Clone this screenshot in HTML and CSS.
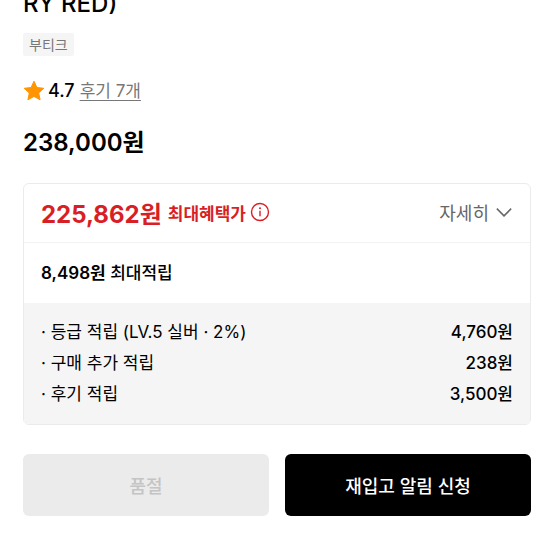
FILE: index.html
```html
<!DOCTYPE html>
<html lang="ko">
<head>
  <meta charset="UTF-8" />
  <meta name="viewport" content="width=device-width, initial-scale=1.0" />
  <title>상품 정보</title>
  <link rel="stylesheet" href="styles.css">
</head>
<body>
  <main class="product">
    <h1 class="product-name">RY RED)</h1>
    <span class="tag">부티크</span>

    <div class="rating">
      <svg class="star" viewBox="0 0 22 22" aria-hidden="true">
        <path d="M11 1.2l2.9 6.3 6.9.8-5.1 4.7 1.4 6.8-6.1-3.4-6.1 3.4 1.4-6.8L1.2 8.3l6.9-.8z" fill="#ff9500" stroke="#ff9500" stroke-linejoin="round" />
      </svg>
      <span class="score">4.7</span>
      <a class="review-link" href="#reviews">후기 7개</a>
    </div>

    <p class="price">238,000원</p>

    <section class="benefit">
      <div class="benefit-head">
        <strong class="benefit-price">225,862원</strong>
        <span class="benefit-label">최대혜택가</span>
        <button class="info-btn" type="button" aria-label="최대혜택가 안내">
          <svg viewBox="0 0 20 20" aria-hidden="true">
            <circle cx="10" cy="10" r="8.5" fill="none" stroke="currentColor" stroke-width="1.4" />
            <circle cx="10" cy="6.3" r="1" fill="currentColor" />
            <path d="M10 8.8v5.4" stroke="currentColor" stroke-width="1.4" />
          </svg>
        </button>
        <button class="detail-btn" type="button">
          자세히
          <svg viewBox="0 0 16 10" aria-hidden="true">
            <path d="M1.5 1.5L8 8l6.5-6.5" fill="none" stroke="currentColor" stroke-width="1.4" />
          </svg>
        </button>
      </div>

      <p class="benefit-point"><strong>8,498원</strong> 최대적립</p>

      <dl class="point-list">
        <div class="point-row">
          <dt>· 등급 적립 (LV.5 실버 · 2%)</dt>
          <dd>4,760원</dd>
        </div>
        <div class="point-row">
          <dt>· 구매 추가 적립</dt>
          <dd>238원</dd>
        </div>
        <div class="point-row">
          <dt>· 후기 적립</dt>
          <dd>3,500원</dd>
        </div>
      </dl>
    </section>

    <div class="actions">
      <button class="btn btn-soldout" type="button" disabled>품절</button>
      <button class="btn btn-restock" type="button">재입고 알림 신청</button>
    </div>
  </main>
</body>
</html>
```

FILE: styles.css
```css
* {
  box-sizing: border-box;
  margin: 0;
  padding: 0;
}

body {
  font-family: Inter, "Noto Sans CJK KR", sans-serif;
  font-size: 17px;
  background: #fff;
  color: #000;
}

button {
  font: inherit;
  border: none;
  background: none;
  cursor: pointer;
}

.product {
  padding: 0 23px 24px;
}

/* 상품명, 태그, 평점 */
.product-name {
  margin-top: -12px;
  font-size: 24px;
  line-height: 32px;
  font-weight: 500;
}

.tag {
  display: block;
  width: fit-content;
  margin-top: 13px;
  padding: 0 6px;
  border-radius: 2px;
  background: #f5f5f5;
  color: #777;
  font-size: 14px;
  line-height: 23px;
}

.rating {
  display: flex;
  align-items: center;
  margin-top: 23px;
  line-height: 24px;
}

.star {
  width: 22px;
  height: 22px;
}

.score {
  margin-left: 3px;
  font-size: 18px;
  font-weight: 500;
}

.review-link {
  margin-left: 5px;
  color: #777;
  font-size: 17px;
  text-decoration: underline;
  text-underline-offset: 3px;
  text-decoration-thickness: 1px;
}

.price {
  margin-top: 24px;
  font-size: 24px;
  line-height: 32px;
  font-weight: 600;
}

/* 최대혜택가 카드 */
.benefit {
  margin-top: 24px;
  border: 1px solid #ebebeb;
  border-radius: 6px;
  overflow: hidden;
}

.benefit-head {
  display: flex;
  align-items: center;
  height: 59px;
  padding: 0 17px 2px;
  border-bottom: 1px solid #f2f2f2;
  color: #d91f26;
}

.benefit-price {
  font-size: 24px;
  font-weight: 700;
}

.benefit-label {
  margin-left: 6px;
  font-weight: 600;
}

.info-btn {
  display: flex;
  margin-left: 4px;
  color: inherit;
}

.info-btn svg {
  width: 20px;
  height: 20px;
}

.detail-btn {
  display: flex;
  align-items: center;
  gap: 6px;
  margin-left: auto;
  color: #666;
  font-size: 18px;
}

.detail-btn svg {
  width: 18px;
  height: 11px;
}

.benefit-point {
  padding: 0 17px;
  line-height: 60px;
  font-weight: 500;
}

.benefit-point strong {
  font-weight: 600;
}

.point-list {
  padding: 14px 17px;
  background: #f5f5f5;
}

.point-row {
  display: flex;
  justify-content: space-between;
  line-height: 31px;
}

.point-row dd {
  font-weight: 500;
}

/* 하단 버튼 */
.actions {
  display: grid;
  grid-template-columns: 1fr 1fr;
  gap: 16px;
  margin-top: 29px;
}

.btn {
  height: 62px;
  border-radius: 6px;
  font-size: 18px;
  font-weight: 500;
}

.btn-soldout {
  background: #ebebeb;
  color: #c4c4c4;
  cursor: default;
}

.btn-restock {
  background: #000;
  color: #fff;
}
```
